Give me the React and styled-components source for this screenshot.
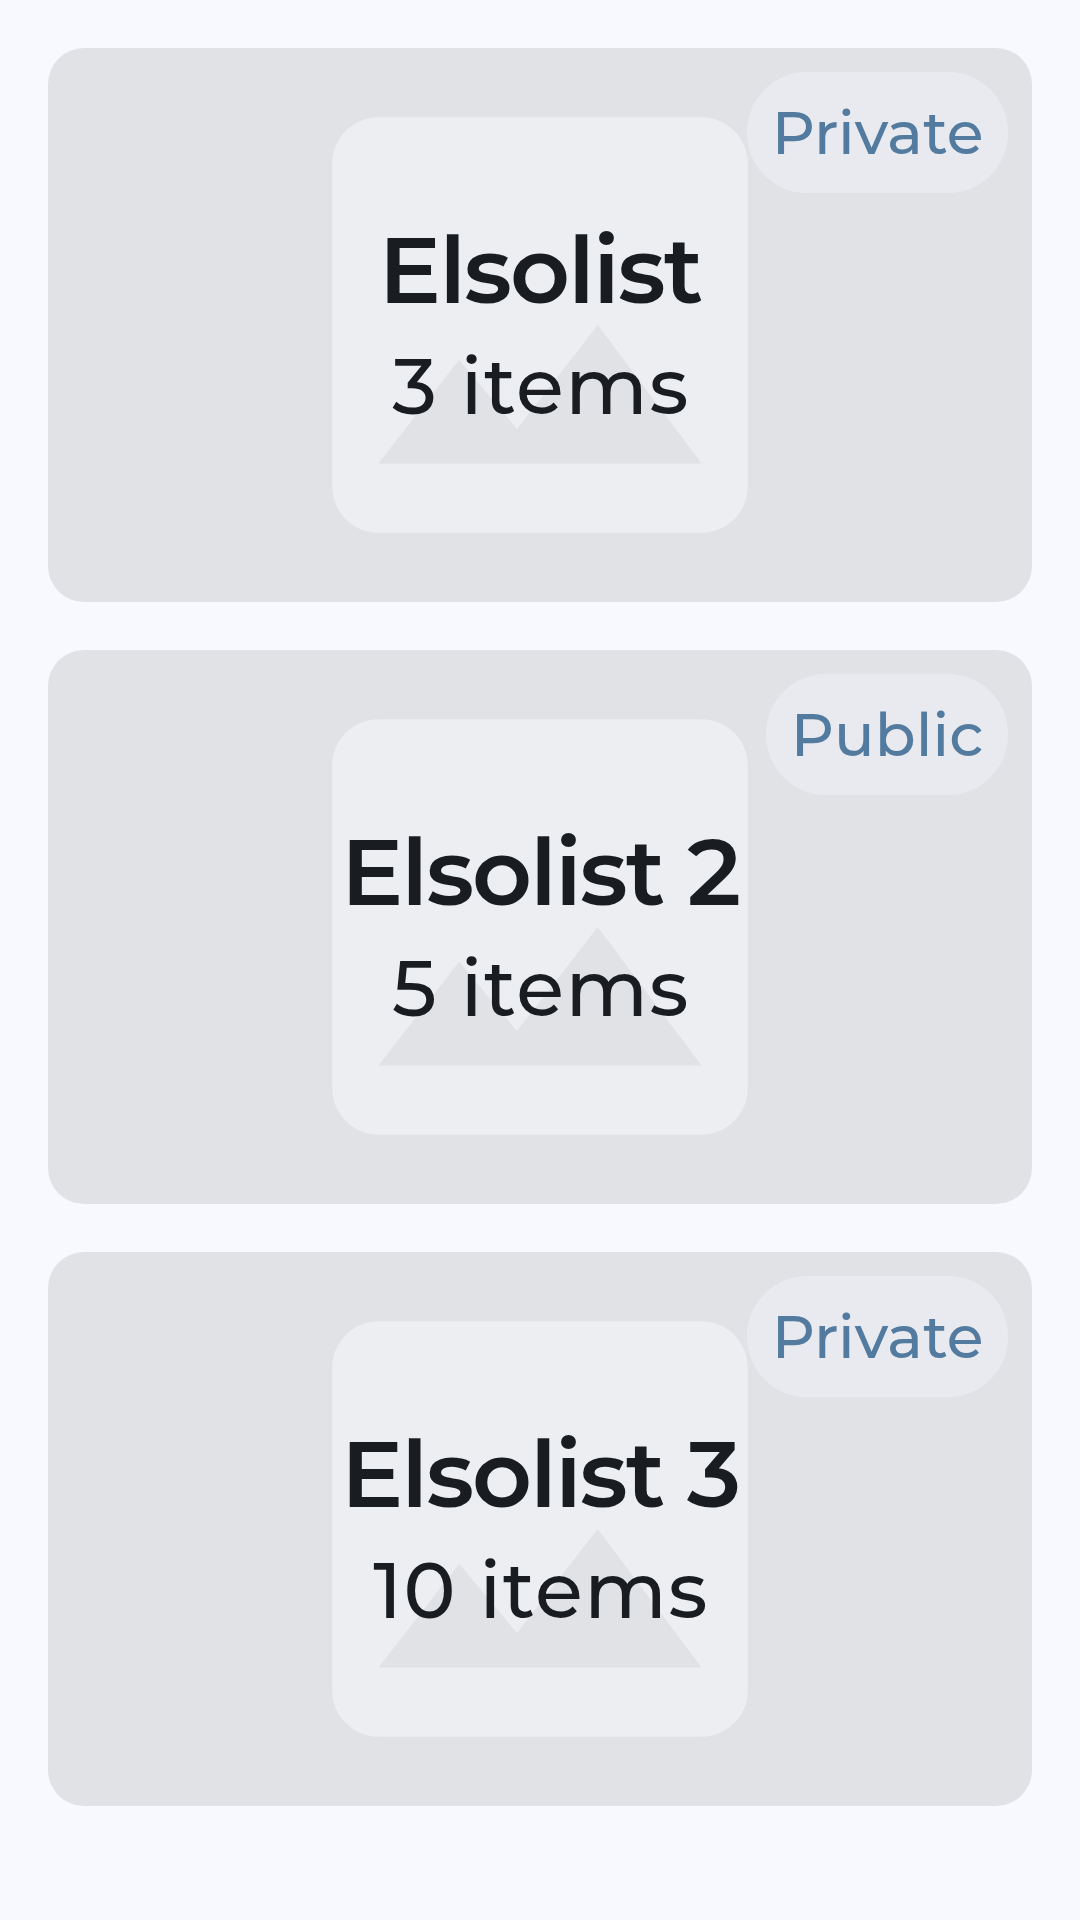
import React from "react";
import styled, { createGlobalStyle } from "styled-components";

const GlobalStyle = createGlobalStyle`
  *, *::before, *::after { box-sizing: border-box; }
  body {
    margin: 0;
    background: #f8f9ff;
    font-family: Montserrat, Inter, "Open Sans", sans-serif;
    color: #191c20;
  }
`;

const Page = styled.main`
  display: flex;
  flex-direction: column;
  gap: 48px;
  width: 1080px;
  min-height: 1920px;
  padding: 48px;
  background: #f8f9ff;
`;

const Card = styled.article`
  position: relative;
  display: flex;
  flex-direction: column;
  align-items: center;
  justify-content: center;
  flex: none;
  height: 554px;
  padding-top: 3px;
  border-radius: 36px;
  background: #e1e2e6;
  overflow: hidden;
`;

const Placeholder = styled.svg`
  position: absolute;
  top: 0;
  left: 50%;
  width: 554px;
  height: 554px;
  transform: translateX(-50%);
  fill: #edeef2;
`;

const Title = styled.h2`
  position: relative;
  margin: 0;
  font-size: 93px;
  line-height: 120px;
  font-weight: 600;
  letter-spacing: -1.98px;
  white-space: nowrap;
`;

const Count = styled.p`
  position: relative;
  margin: 0;
  padding-left: 2px;
  font-size: 78px;
  line-height: 113px;
  font-weight: 500;
  letter-spacing: 1.5px;
  white-space: nowrap;
`;

const Badge = styled.span`
  position: absolute;
  top: 24px;
  right: 24px;
  height: 121px;
  padding: 0 24.6px;
  border-radius: 60px;
  background: #e9eaef;
  color: #527b9f;
  font-size: 60px;
  line-height: 121px;
  font-weight: 500;
  white-space: nowrap;
`;

const lists = [
  { title: "Elsolist", count: "3 items", visibility: "Private" },
  { title: "Elsolist 2", count: "5 items", visibility: "Public" },
  { title: "Elsolist 3", count: "10 items", visibility: "Private" },
];

function ListCard({ list }) {
  return (
    <Card>
      <Placeholder viewBox="0 0 24 24" aria-hidden="true">
        <path d="M21 19V5c0-1.1-.9-2-2-2H5c-1.1 0-2 .9-2 2v14c0 1.1.9 2 2 2h14c1.1 0 2-.9 2-2zM8.5 13.5l2.5 3.01L14.5 12l4.5 6H5l3.5-4.5z" />
      </Placeholder>
      <Title>{list.title}</Title>
      <Count>{list.count}</Count>
      <Badge>{list.visibility}</Badge>
    </Card>
  );
}

export default function App() {
  return (
    <>
      <GlobalStyle />
      <Page>
        {lists.map((list) => (
          <ListCard key={list.title} list={list} />
        ))}
      </Page>
    </>
  );
}
